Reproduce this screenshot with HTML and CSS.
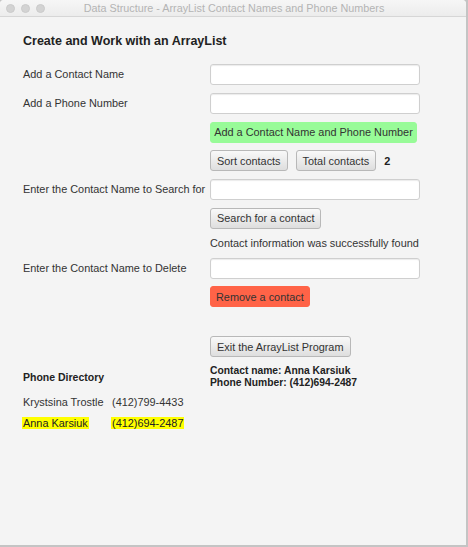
FILE: index.html
```html
<!DOCTYPE html>
<html>
<head>
<meta charset="utf-8">
<link rel="stylesheet" href="styles.css">
<title>Data Structure</title>
</head>
<body>
<div class="window">
  <div class="titlebar">
    <div class="lights"><span class="light"></span><span class="light"></span><span class="light"></span></div>
    <div class="title">Data Structure - ArrayList Contact Names and Phone Numbers</div>
  </div>
  <div class="content">
    <h1 class="heading">Create and Work with an ArrayList</h1>
    <div class="form">
      <label class="label">Add a Contact Name</label>
      <input class="field" type="text">

      <label class="label">Add a Phone Number</label>
      <input class="field" type="text">

      <span></span>
      <div class="cell"><button class="btn btn-green">Add a Contact Name and Phone Number</button></div>

      <span></span>
      <div class="cell inline">
        <button class="btn">Sort contacts</button>
        <button class="btn">Total contacts</button>
        <span class="count">2</span>
      </div>

      <label class="label">Enter the Contact Name to Search for</label>
      <input class="field" type="text">

      <span></span>
      <div class="cell"><button class="btn">Search for a contact</button></div>

      <span></span>
      <div class="message">Contact information was successfully found</div>

      <label class="label">Enter the Contact Name to Delete</label>
      <input class="field" type="text">

      <span></span>
      <div class="cell"><button class="btn btn-red">Remove a contact</button></div>

      <span class="spacer"></span>
      <div class="cell spacer-cell"><button class="btn">Exit the ArrayList Program</button></div>

      <div class="dir-title">Phone Directory</div>
      <div class="info">Contact name: Anna Karsiuk<br>Phone Number: (412)694-2487</div>
    </div>
    <div class="directory">
      <span class="name">Krystsina Trostle</span><span class="phone">(412)799-4433</span>
      <span class="name"><span class="hl">Anna Karsiuk</span></span><span class="phone"><span class="hl">(412)694-2487</span></span>
    </div>
  </div>
</div>
</body>
</html>
```
FILE: styles.css
```css
* { box-sizing: border-box; }
html, body {
  margin: 0;
  padding: 0;
  background: #c4c4c4;
}
body {
  width: 468px;
  height: 547px;
  overflow: hidden;
  font-family: "Liberation Sans", Arial, sans-serif;
}
.window {
  width: 466px;
  height: 545px;
  background: #f4f4f4;
  border-top-right-radius: 4px;
  border-top-left-radius: 4px;
  overflow: hidden;
  display: flex;
  flex-direction: column;
}
.titlebar {
  height: 17px;
  flex: none;
  background: linear-gradient(#f6f6f6, #ececec);
  border-bottom: 1px solid #d6d6d6;
  position: relative;
  display: flex;
  align-items: center;
  justify-content: center;
}
.lights {
  position: absolute;
  left: 6px;
  top: 4px;
  display: flex;
  gap: 6px;
}
.light {
  width: 9px;
  height: 9px;
  border-radius: 50%;
  background: #d3d3d3;
  border: 1px solid #cbcbcb;
}
.title {
  font-size: 10.8px;
  color: #b4b4b4;
  margin-left: 2px;
}
.content {
  padding: 17px 0 0 23px;
  color: #333;
}
.heading {
  margin: 0;
  font-size: 12.5px;
  line-height: 15px;
  font-weight: bold;
  color: #222;
}
.form {
  margin-top: 15px;
  display: grid;
  grid-template-columns: 187px 1fr;
  grid-auto-rows: auto;
  row-gap: 7.8px;
  align-items: center;
  font-size: 10.9px;
}
.label {
  line-height: 13px;
  color: #333;
}
.field {
  width: 210px;
  height: 21px;
  margin: 0;
  background: #fff;
  border: 1px solid #cfcfcf;
  border-radius: 3px;
  box-shadow: inset 0 1px 1px #ececec;
  outline: none;
}
.cell { display: flex; }
.inline { align-items: center; gap: 8px; }
.btn {
  height: 21px;
  margin: 0;
  padding: 0 6px;
  white-space: nowrap;
  font-family: inherit;
  font-size: 10.9px;
  color: #333;
  background: linear-gradient(#f9f9f9, #dedede);
  border: 1px solid #b8b8b8;
  border-radius: 3px;
}
.btn-green {
  background: #98fb98;
  border-color: #98fb98;
  width: 207px;
  padding: 0;
}
.btn-red {
  background: #ff6347;
  border-color: #ff6347;
  padding: 0 5px;
}
.count {
  font-weight: bold;
  color: #222;
}
.message {
  line-height: 13px;
  color: #333;
}
.spacer-cell { margin-top: 21px; }
.dir-title {
  font-size: 10.5px;
  font-weight: bold;
  color: #222;
  line-height: 13px;
  margin-top: 1px;
}
.info {
  font-size: 10.3px;
  font-weight: bold;
  color: #222;
  line-height: 12px;
}
.directory {
  margin-top: 7.5px;
  display: grid;
  grid-template-columns: 89px auto;
  justify-content: start;
  row-gap: 8px;
  font-size: 10.9px;
  line-height: 13px;
  color: #333;
}
.hl {
  background: #ffff00;
  color: #222;
  margin-left: -1px;
  padding: 0 1px;
}
```
